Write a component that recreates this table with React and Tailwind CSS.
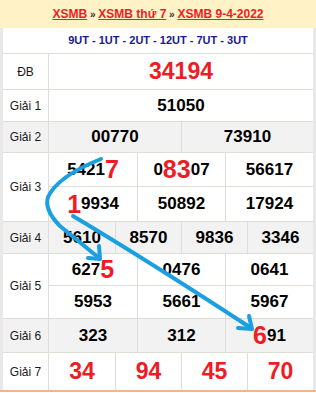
import React from 'react';

const RED = 'text-[#ee1c25]';

const Cell = ({ children, big = false }) => (
    <div
        className={`flex items-center justify-center border-l border-[#e0ddd6] first:border-l-0 font-bold ${
            big ? 'text-[23px] text-[#ee1c25]' : 'text-[17px] text-black'
        }`}
    >
        {children}
    </div>
);

const Big = ({ children }) => <span className={`${RED} text-[25px] leading-none`}>{children}</span>;

const Label = ({ children }) => (
    <div className="w-[46px] shrink-0 flex items-center justify-center border-r border-[#e0ddd6] text-[12px] text-[#1a1a1a]">
        {children}
    </div>
);

const App = () => {
    return (
        <div className="relative w-[316px] h-[393px] bg-white font-['Liberation_Sans',Arial,sans-serif] overflow-hidden">
            {/* tiêu đề */}
            <div className="h-[28px] bg-[#fff2c6] flex items-center justify-center text-[12px] font-bold whitespace-pre">
                <span className="text-[#ee1c25] underline">XSMB</span>
                <span className="text-[#333] text-[10px]"> » </span>
                <span className="text-[#ee1c25] underline">XSMB thứ 7</span>
                <span className="text-[#333] text-[10px]"> » </span>
                <span className="text-[#ee1c25] underline">XSMB 9-4-2022</span>
            </div>

            <div className="border-x-[3px] border-[#e8e8e8]">
                <div className="h-[26px] flex items-center justify-center border-b border-[#e0ddd6] text-[11px] font-bold text-[#1a1a8c]">
                    9UT - 1UT - 2UT - 12UT - 7UT - 3UT
                </div>

                {/* ĐB */}
                <div className="h-[36px] flex border-b border-[#e0ddd6]">
                    <Label>ĐB</Label>
                    <div className="flex-1 grid grid-cols-1">
                        <Cell big>34194</Cell>
                    </div>
                </div>

                {/* Giải 1 */}
                <div className="h-[32px] flex border-b border-[#e0ddd6]">
                    <Label>Giải 1</Label>
                    <div className="flex-1 grid grid-cols-1">
                        <Cell>51050</Cell>
                    </div>
                </div>

                {/* Giải 2 */}
                <div className="h-[31px] flex border-b border-[#e0ddd6] bg-[#f2f2f2]">
                    <Label>Giải 2</Label>
                    <div className="flex-1 grid grid-cols-2">
                        <Cell>00770</Cell>
                        <Cell>73910</Cell>
                    </div>
                </div>

                {/* Giải 3 */}
                <div className="h-[69px] flex border-b border-[#e0ddd6]">
                    <Label>Giải 3</Label>
                    <div className="flex-1 grid grid-rows-2">
                        <div className="grid grid-cols-3 border-b border-[#e0ddd6]">
                            <Cell>5421<Big>7</Big></Cell>
                            <Cell>0<Big>83</Big>07</Cell>
                            <Cell>56617</Cell>
                        </div>
                        <div className="grid grid-cols-3">
                            <Cell><Big>1</Big>9934</Cell>
                            <Cell>50892</Cell>
                            <Cell>17924</Cell>
                        </div>
                    </div>
                </div>

                {/* Giải 4 */}
                <div className="h-[32px] flex border-b border-[#e0ddd6] bg-[#f2f2f2]">
                    <Label>Giải 4</Label>
                    <div className="flex-1 grid grid-cols-4">
                        <Cell>5610</Cell>
                        <Cell>8570</Cell>
                        <Cell>9836</Cell>
                        <Cell>3346</Cell>
                    </div>
                </div>

                {/* Giải 5 */}
                <div className="h-[65px] flex border-b border-[#e0ddd6]">
                    <Label>Giải 5</Label>
                    <div className="flex-1 grid grid-rows-2">
                        <div className="grid grid-cols-3 border-b border-[#e0ddd6]">
                            <Cell>627<Big>5</Big></Cell>
                            <Cell>0476</Cell>
                            <Cell>0641</Cell>
                        </div>
                        <div className="grid grid-cols-3">
                            <Cell>5953</Cell>
                            <Cell>5661</Cell>
                            <Cell>5967</Cell>
                        </div>
                    </div>
                </div>

                {/* Giải 6 */}
                <div className="h-[34px] flex border-b border-[#e0ddd6] bg-[#f2f2f2]">
                    <Label>Giải 6</Label>
                    <div className="flex-1 grid grid-cols-3">
                        <Cell>323</Cell>
                        <Cell>312</Cell>
                        <Cell><Big>6</Big>91</Cell>
                    </div>
                </div>

                {/* Giải 7 */}
                <div className="h-[37px] flex">
                    <Label>Giải 7</Label>
                    <div className="flex-1 grid grid-cols-4">
                        <Cell big>34</Cell>
                        <Cell big>94</Cell>
                        <Cell big>45</Cell>
                        <Cell big>70</Cell>
                    </div>
                </div>
            </div>
            <div className="h-[2px] bg-[#f4b488]" />

            {/* mũi tên */}
            <svg className="absolute inset-0 pointer-events-none" width="316" height="393" viewBox="0 0 316 393">
                <g fill="none" stroke="#1a9fe0" strokeWidth="4" strokeLinecap="round" strokeLinejoin="round">
                    <path d="M101 159 Q58 176 48 197 Q44 210 60 226 L99 258" />
                    <path d="M88 258 L100 259 L99 246" />
                    <path d="M73 216 Q150 262 251 328" />
                    <path d="M238 328 L252 329 L249 316" />
                </g>
            </svg>
        </div>
    );
};

export default App;
